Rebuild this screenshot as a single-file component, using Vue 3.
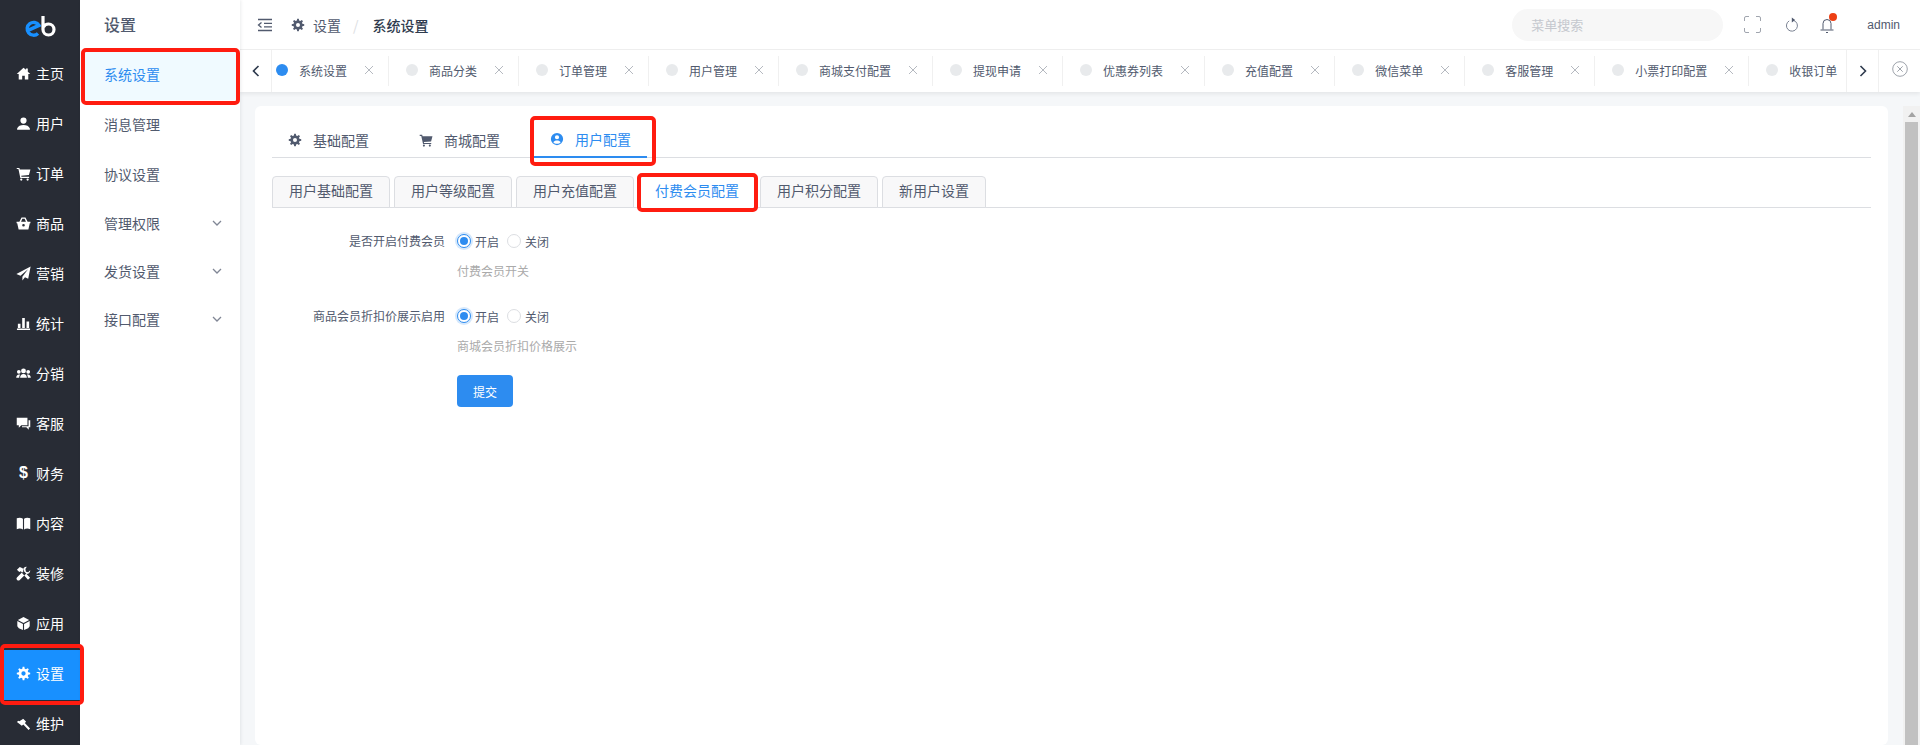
<script setup>
function gear(teeth, outer, inner, hole) {
  const step = (Math.PI * 2) / teeth
  let d = ''
  for (let i = 0; i < teeth; i++) {
    const a = i * step
    const pts = [
      [outer, a - step * 0.16],
      [outer, a + step * 0.16],
      [inner, a + step * 0.32],
      [inner, a + step * 0.68]
    ]
    pts.forEach(([r, t], j) => {
      const x = (8 + r * Math.cos(t)).toFixed(2)
      const y = (8 + r * Math.sin(t)).toFixed(2)
      d += `${i === 0 && j === 0 ? 'M' : 'L'}${x} ${y}`
    })
  }
  d += `ZM${8 - hole} 8a${hole} ${hole} 0 1 0 ${hole * 2} 0a${hole} ${hole} 0 1 0 ${-hole * 2} 0Z`
  return d
}

const icons = {
  home: 'M8 1.800.8 8.600h2.100V14.400h3.700v-4h2.800v4h3.700V8.600h2.100L12.600 6V2.600h-2v1.500z',
  user: 'M8 1.600a3.300 3.300 0 1 1 0 6.600 3.300 3.300 0 0 1 0-6.600zM1.200 13.400C2 10.600 5 9.600 8 9.600s6 1 6.800 3.800V14.600H1.200z',
  cart: 'M.8 2h2.800l.5 1.800H15.400L13.800 9.600 5.600 10.400l.2 1H14v1.300H4.600L2.600 3.300H.8zM5.600 13.200a1.200 1.200 0 1 1 0 2.400 1.200 1.200 0 0 1 0-2.400zM12.400 13.200a1.200 1.200 0 1 1 0 2.400 1.200 1.200 0 0 1 0-2.400z',
  basket: 'M5.900 1.600h4.200L12.400 6h3v1.600h-.7L13.200 14.400H2.800L1.300 7.600H.6V6h3zM6.800 3 5.400 6h5.200L9.200 3zM8 8.400a1.400 1.400 0 1 0 0 2.800 1.400 1.400 0 0 0 0-2.800z',
  plane: 'M15.600.4 .4 8.600l4.400 1.800 8-6.900-6 7.900V15.400l2.800-3.300 3.400 1.400z',
  stats: 'M1 13.400h14V15H1zM2 8.200h2.800v4.600H2zM6.600 2h2.800v10.800H6.600zM11.200 5.800h2.800v7H11.200z',
  people: 'M3 4.200a2 2 0 1 1 0 4 2 2 0 0 1 0-4zM13 4.200a2 2 0 1 1 0 4 2 2 0 0 1 0-4zM8 2.600a2.600 2.600 0 1 1 0 5.200 2.600 2.600 0 0 1 0-5.200zM.2 12.600c0-2.200 1.300-3.600 3-3.600.5 0 .9.100 1.200.3-.7.700-1 1.800-1 3.300zM15.800 12.600c0-2.200-1.300-3.600-3-3.600-.5 0-.9.100-1.200.3.700.700 1 1.800 1 3.300zM8 8.600c2.200 0 3.600 1.400 3.600 4H4.400C4.400 10 5.800 8.600 8 8.600z',
  chat: 'M.8 1.800H12.200V9.800H5.600L3 12.400V9.800H.8zM13.400 4.400H15.200V12H13.600V14.600L11 12H6.400V11H13.400z',
  book: 'M.8 2.400C3.200 1.400 5.800 1.600 7.400 3V14.400C5.800 13.200 3.200 13 .8 14zM8.600 3C10.200 1.600 12.800 1.400 15.200 2.400V14C12.800 13 10.200 13.200 8.600 14.400z',
  tools: 'M11.500.8A3.800 3.800 0 0 0 7.600 5.600L1.200 12A1.900 1.900 0 0 0 4 14.800L10.400 8.400A3.800 3.800 0 0 0 15.200 4.500L13 6.600 10.600 6 10 3.200zM1 4 4 1 7 2.500 8.500 4.500 6.800 6.800 5 5.500 3.500 6.500zM6 7 8 5 15 12.500 12.800 14.700z',
  cube: 'M8 1 14 4.200 8 7.400 2 4.200zM1.400 5.300 7.400 8.500V15L3 13 1.400 11zM14.600 5.300 8.600 8.500V15L13 13 14.600 11z',
  hammer: 'M6.400 1.600 10.800 6 9.400 7.400 15 13.400 13.400 15 7.800 9 6.200 10.400 1 6.400 2.400 5 3.600 5.600 7.800 3z',
  gear: gear(8, 7.2, 5.2, 2.3)
}

const nonzeroIcons = ['tools']

const mainMenu = [
  { label: '主页', icon: 'home' },
  { label: '用户', icon: 'user' },
  { label: '订单', icon: 'cart' },
  { label: '商品', icon: 'basket' },
  { label: '营销', icon: 'plane' },
  { label: '统计', icon: 'stats' },
  { label: '分销', icon: 'people' },
  { label: '客服', icon: 'chat' },
  { label: '财务', icon: 'dollar' },
  { label: '内容', icon: 'book' },
  { label: '装修', icon: 'tools' },
  { label: '应用', icon: 'cube' },
  { label: '设置', icon: 'gear', active: true },
  { label: '维护', icon: 'hammer' }
]

const subMenu = [
  { label: '系统设置', active: true },
  { label: '消息管理' },
  { label: '协议设置' },
  { label: '管理权限', arrow: true },
  { label: '发货设置', arrow: true },
  { label: '接口配置', arrow: true }
]

const pageTabs = [
  '系统设置', '商品分类', '订单管理', '用户管理', '商城支付配置', '提现申请', '优惠券列表',
  '充值配置', '微信菜单', '客服管理', '小票打印配置', '收银订单'
]

const configTabs = [
  { label: '基础配置', icon: 'gear' },
  { label: '商城配置', icon: 'cart' },
  { label: '用户配置', icon: 'account', active: true }
]

const cardTabs = ['用户基础配置', '用户等级配置', '用户充值配置', '付费会员配置', '用户积分配置', '新用户设置']

const fields = [
  { label: '是否开启付费会员', help: '付费会员开关' },
  { label: '商品会员折扣价展示启用', help: '商城会员折扣价格展示' }
]
</script>

<template>
  <div class="layout">
    <aside class="main-nav">
      <div class="logo">
        <svg width="31" height="22" viewBox="0 0 31 22" fill="none">
          <path d="M2.500 14.600 14 9.400A6.400 6.400 0 1 0 13 17.400" stroke="#1890ff" stroke-width="3.400" />
          <path d="M18 0V13.500A5.500 5.500 0 1 0 23.500 8C21 8 19.500 9 18.500 11" stroke="#fff" stroke-width="3.200" />
        </svg>
      </div>
      <div
        v-for="item in mainMenu"
        :key="item.label"
        class="main-item"
        :class="{ active: item.active, marked: item.active }"
      >
        <span v-if="item.icon === 'dollar'" class="dollar">$</span>
        <svg
          v-else
          class="nav-icon"
          viewBox="0 0 16 16"
          fill="currentColor"
          :fill-rule="nonzeroIcons.includes(item.icon) ? 'nonzero' : 'evenodd'"
        >
          <path :d="icons[item.icon]" />
        </svg>
        <span>{{ item.label }}</span>
      </div>
    </aside>

    <aside class="sub-nav">
      <div class="sub-title">设置</div>
      <div
        v-for="item in subMenu"
        :key="item.label"
        class="sub-item"
        :class="{ active: item.active, marked: item.active, short: item.arrow }"
      >
        <span>{{ item.label }}</span>
        <svg v-if="item.arrow" width="12" height="12" viewBox="0 0 12 12" fill="none" stroke="#808695" stroke-width="1.300">
          <path d="M2 4l4 4 4-4" />
        </svg>
      </div>
    </aside>

    <div class="workspace">
      <header class="topbar">
        <svg class="collapse" width="16" height="14" viewBox="0 0 16 14" fill="none" stroke="#515a6e" stroke-width="1.300">
          <path d="M1 1.500H15M7 5.300H15M7 8.900H15M1 12.500H15" />
          <path d="M4.500 4.500 1.500 7l3 2.500" />
        </svg>
        <svg class="crumb-icon" viewBox="0 0 16 16" fill="currentColor" fill-rule="evenodd">
          <path :d="icons.gear" />
        </svg>
        <span class="crumb">设置</span>
        <span class="crumb-sep">/</span>
        <span class="crumb current">系统设置</span>
        <div class="top-tools">
          <div class="search">菜单搜索</div>
          <svg class="tool-full" width="17" height="17" viewBox="0 0 17 17" fill="none" stroke="#a0a5ae" stroke-width="1">
            <path d="M.500 5V2A1.500 1.500 0 0 1 2 .500H5M12 .500h3A1.500 1.500 0 0 1 16.500 2V5M16.500 12v3A1.500 1.500 0 0 1 15 16.500H12M5 16.500H2A1.500 1.500 0 0 1 .500 15V12" />
          </svg>
          <svg class="tool-refresh" width="14" height="16" viewBox="0 0 14 16" fill="none" stroke="#7a8292" stroke-width="1">
            <path d="M8.500 3.400A5.500 5.500 0 1 1 4.200 3.900" />
            <path d="M6.800 .4 10.200 3 6.800 5.600z" fill="#515a6e" stroke="none" />
          </svg>
          <span class="tool-bell">
            <svg width="14" height="15" viewBox="0 0 14 15" fill="none" stroke="#515a6e" stroke-width="1">
              <path d="M3 11.500V5.500A4 4 0 0 1 11 5.500V11.500M.5 12H13.500" />
              <path d="M6 14.500H8" />
            </svg>
            <i class="bell-dot"></i>
          </span>
          <span class="admin">admin</span>
        </div>
      </header>

      <div class="tabs-bar">
        <div class="tabs-arrow left">
          <svg width="10" height="14" viewBox="0 0 10 14" fill="none" stroke="#2f3b4e" stroke-width="1.600">
            <path d="M7.500 2 2.500 7l5 5" />
          </svg>
        </div>
        <div class="tabs-strip">
          <div class="tabs-track">
            <div v-for="(tab, i) in pageTabs" :key="tab" class="page-tab">
              <i class="tab-dot" :class="{ on: i === 0 }"></i>
              <span class="tab-text">{{ tab }}</span>
              <svg class="tab-close" width="10" height="10" viewBox="0 0 10 10" fill="none" stroke="#b5b9c0" stroke-width="1">
                <path d="M1 1l8 8M9 1 1 9" />
              </svg>
            </div>
          </div>
        </div>
        <div class="tabs-arrow right">
          <svg width="10" height="14" viewBox="0 0 10 14" fill="none" stroke="#2f3b4e" stroke-width="1.600">
            <path d="M2.500 2l5 5-5 5" />
          </svg>
        </div>
        <div class="tabs-close">
          <svg width="16" height="16" viewBox="0 0 16 16" fill="none" stroke="#9ea3ab" stroke-width="1">
            <circle cx="8" cy="8" r="7.300" />
            <path d="M5.300 5.300l5.400 5.400M10.700 5.300l-5.400 5.400" />
          </svg>
        </div>
      </div>

      <div class="content-row">
        <main class="content">
          <section class="card">
            <div class="config-tabs">
              <div
                v-for="tab in configTabs"
                :key="tab.label"
                class="config-tab"
                :class="{ active: tab.active, marked: tab.active }"
              >
                <svg v-if="tab.icon === 'account'" class="config-icon" viewBox="0 0 16 16" fill="currentColor" fill-rule="evenodd">
                  <path d="M8 1a7 7 0 1 0 0 14A7 7 0 0 0 8 1zM8 3.600a2.400 2.400 0 1 1 0 4.800 2.400 2.400 0 0 1 0-4.800zM3.800 11.600C4.600 10.200 6.200 9.600 8 9.600s3.400.6 4.200 2C11.200 12.800 9.700 13.400 8 13.400s-3.200-.6-4.200-1.800z" />
                </svg>
                <svg v-else class="config-icon" viewBox="0 0 16 16" fill="currentColor" fill-rule="evenodd">
                  <path :d="icons[tab.icon]" />
                </svg>
                <span>{{ tab.label }}</span>
              </div>
            </div>

            <div class="card-tabs">
              <div
                v-for="tab in cardTabs"
                :key="tab"
                class="card-tab"
                :class="{ active: tab === '付费会员配置', marked: tab === '付费会员配置' }"
              >
                {{ tab }}
              </div>
            </div>

            <form class="form" @submit.prevent>
              <div v-for="field in fields" :key="field.label" class="form-item">
                <label class="form-label">{{ field.label }}</label>
                <div class="form-control">
                  <div class="radios">
                    <span class="radio checked"></span>
                    <span class="radio-text">开启</span>
                    <span class="radio"></span>
                    <span class="radio-text">关闭</span>
                  </div>
                  <p class="help">{{ field.help }}</p>
                </div>
              </div>
              <button type="submit" class="submit">提交</button>
            </form>
          </section>
        </main>
        <div class="scrollbar">
          <i class="scroll-up"></i>
          <div class="scroll-thumb"></div>
        </div>
      </div>
    </div>
  </div>
</template>

<style>
html,
body {
  margin: 0;
  height: 100%;
  overflow: hidden;
}
</style>

<style scoped>
.layout {
  display: flex;
  height: 745px;
  overflow: hidden;
  background: #f5f7f9;
  color: #515a6e;
  font-family: "Noto Sans CJK SC", "Liberation Sans", sans-serif;
  font-size: 12px;
}

.marked {
  position: relative;
}

.marked::after {
  content: "";
  position: absolute;
  z-index: 5;
  border: 4px solid #ff1c10;
  border-radius: 5px;
  pointer-events: none;
}

.main-nav {
  flex: none;
  width: 80px;
  background: #282c35;
  color: #fff;
}

.logo {
  display: flex;
  align-items: center;
  justify-content: center;
  height: 50px;
  padding-top: 4px;
  box-sizing: border-box;
}

.main-item {
  display: flex;
  align-items: center;
  gap: 5px;
  height: 50px;
  padding: 0 0 4px 16px;
  box-sizing: border-box;
  font-size: 14px;
}

.main-item.active {
  background: #1890ff;
}

.main-item.marked::after {
  inset: -6px -4px -5px 0;
}

.nav-icon {
  width: 15px;
  height: 15px;
  flex: none;
}

.dollar {
  width: 15px;
  text-align: center;
  font-family: "Liberation Sans", sans-serif;
  font-size: 16px;
  font-weight: 700;
}

.sub-nav {
  flex: none;
  width: 160px;
  background: #fff;
  box-shadow: 1px 0 3px rgba(0, 21, 41, 0.08);
  z-index: 2;
}

.sub-title {
  height: 50px;
  padding-left: 24px;
  box-sizing: border-box;
  font-size: 16px;
  font-weight: 500;
  line-height: 48px;
  color: #515a6e;
}

.sub-item {
  display: flex;
  align-items: center;
  justify-content: space-between;
  height: 50px;
  padding: 0 17px 2px 24px;
  box-sizing: border-box;
  font-size: 14px;
}

.sub-item.short {
  height: 48px;
}

.sub-item.active {
  background: #f0faff;
  color: #2d8cf0;
}

.sub-item.marked::after {
  inset: -2px 0 -5px 1px;
}

.workspace {
  display: flex;
  flex: 1;
  flex-direction: column;
  min-width: 0;
}

.topbar {
  display: flex;
  flex: none;
  align-items: center;
  height: 50px;
  padding-left: 17px;
  box-sizing: border-box;
  background: #fff;
  border-bottom: 1px solid #f0f0f0;
  font-size: 14px;
}

.collapse {
  margin-right: 18px;
}

.crumb-icon {
  width: 14px;
  height: 14px;
  margin-right: 8px;
  color: #515a6e;
}

.crumb-sep {
  margin: 0 14px 0 12px;
  color: #dcdee2;
}

.crumb.current {
  color: #2f3b4e;
  font-weight: 500;
}

.top-tools {
  display: flex;
  align-items: center;
  margin-left: auto;
}

.search {
  width: 192px;
  height: 32px;
  padding-left: 19px;
  border-radius: 16px;
  background: #f7f7f7;
  color: #c5c8ce;
  font-size: 13px;
  line-height: 32px;
}

.tool-full {
  margin-left: 21px;
}

.tool-refresh {
  margin-left: 24px;
}

.tool-bell {
  position: relative;
  display: flex;
  margin: 2px 0 0 21px;
}

.bell-dot {
  position: absolute;
  top: -5px;
  right: -3px;
  width: 8px;
  height: 8px;
  border-radius: 50%;
  background: #ed3f14;
}

.admin {
  margin: 0 20px 0 33px;
  font-family: "Liberation Sans", sans-serif;
  font-size: 12px;
}

.tabs-bar {
  display: flex;
  flex: none;
  height: 42px;
  background: #fff;
  box-shadow: 0 2px 4px rgba(0, 0, 0, 0.07);
  z-index: 1;
}

.tabs-arrow {
  display: flex;
  flex: none;
  align-items: center;
  justify-content: center;
  height: 100%;
  box-sizing: border-box;
}

.tabs-arrow.left {
  width: 32px;
  border-right: 1px solid #f0f0f0;
}

.tabs-arrow.right {
  width: 33px;
  border-left: 1px solid #f0f0f0;
  border-right: 1px solid #f0f0f0;
}

.tabs-strip {
  flex: 1;
  min-width: 0;
  overflow: hidden;
}

.tabs-track {
  display: flex;
  align-items: center;
  height: 100%;
  margin-left: -13px;
}

.page-tab {
  display: flex;
  flex: none;
  align-items: center;
  height: 30px;
  padding: 0 14px 2px 17px;
  border-right: 1px solid #f0f0f0;
  box-sizing: border-box;
}

.tab-dot {
  width: 12px;
  height: 12px;
  margin-right: 11px;
  border-radius: 50%;
  background: #e8eaec;
}

.tab-dot.on {
  background: #2d8cf0;
}

.tab-text {
  margin-right: 17px;
  white-space: nowrap;
}

.tab-close {
  flex: none;
}

.tabs-close {
  display: flex;
  flex: none;
  width: 41px;
  align-items: center;
  justify-content: center;
  padding-bottom: 4px;
  box-sizing: border-box;
}

.content-row {
  display: flex;
  flex: 1;
  min-height: 0;
}

.content {
  flex: 1;
  min-width: 0;
  padding: 14px 15px 0;
}

.card {
  height: 100%;
  padding: 16px 17px;
  box-sizing: border-box;
  border-radius: 6px;
  background: #fff;
}

.config-tabs {
  display: flex;
  gap: 18px;
  height: 36px;
  box-sizing: border-box;
  border-bottom: 1px solid #dcdee2;
  font-size: 14px;
}

.config-tab {
  display: flex;
  align-items: center;
  gap: 11px;
  height: 36px;
  box-sizing: border-box;
  padding: 0 16px 1px;
}

.config-tab.active {
  color: #2d8cf0;
  border-bottom: 2px solid #2d8cf0;
}

.config-tab.marked::after {
  inset: -6px -9px -10px -4px;
}

.config-icon {
  width: 14px;
  height: 14px;
  flex: none;
}

.card-tabs {
  display: flex;
  gap: 4px;
  height: 32px;
  margin-top: 18px;
  box-sizing: border-box;
  border-bottom: 1px solid #dcdee2;
  font-size: 14px;
}

.card-tab {
  height: 32px;
  padding: 0 16px;
  box-sizing: border-box;
  border: 1px solid #dcdee2;
  border-radius: 4px 4px 0 0;
  background: #f8f8f9;
  line-height: 27px;
}

.card-tab.active {
  border-bottom-color: #fff;
  background: #fff;
  color: #2d8cf0;
}

.card-tab.marked::after {
  inset: -4px -3px -5px -2px;
}

.form {
  padding-top: 17px;
}

.form-item {
  display: flex;
  margin-bottom: 19px;
}

.form-label {
  flex: none;
  width: 173px;
  padding-right: 12px;
  text-align: right;
  line-height: 32px;
}

.radios {
  display: flex;
  align-items: center;
  height: 32px;
}

.radio {
  position: relative;
  width: 14px;
  height: 14px;
  margin-right: 4px;
  box-sizing: border-box;
  border: 1px solid #dcdee2;
  border-radius: 50%;
  background: #fff;
}

.radio.checked {
  border-color: #2d8cf0;
  box-shadow: 0 0 0 2px rgba(45, 140, 240, 0.2);
}

.radio.checked::after {
  content: "";
  position: absolute;
  inset: 2px;
  border-radius: 50%;
  background: #2d8cf0;
}

.radio-text {
  margin-right: 8px;
}

.help {
  margin: 4px 0 0;
  color: #aaa;
  line-height: 20px;
}

.submit {
  display: block;
  width: 56px;
  height: 32px;
  margin-left: 185px;
  padding: 0;
  border: 0;
  border-radius: 4px;
  background: #2d8cf0;
  color: #fff;
  font: inherit;
}

.scrollbar {
  position: relative;
  flex: none;
  width: 17px;
  margin-top: 14px;
  background: #f1f1f1;
}

.scroll-up {
  display: block;
  width: 0;
  height: 0;
  margin: 6px auto 5px;
  border: 4px solid transparent;
  border-top: 0;
  border-bottom: 5px solid #a3a3a3;
}

.scroll-thumb {
  height: 640px;
  margin: 0 2px;
  background: #c1c1c1;
}
</style>
